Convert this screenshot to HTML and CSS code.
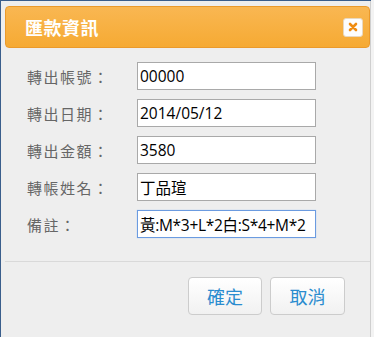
FILE: index.html
```html
<!DOCTYPE html>
<html lang="zh-Hant">
<head>
    <meta charset="UTF-8">
    <meta name="viewport" content="width=device-width, initial-scale=1.0">
    <title>匯款資訊</title>
    <link rel="stylesheet" href="styles.css">
</head>
<body>

    <div class="dialog">
        <div class="dialog-header">
            <span class="dialog-title">匯款資訊</span>
            <span class="close-btn">
                <svg width="10" height="10" viewBox="0 0 10 10">
                    <path d="M2 2 L8 8 M8 2 L2 8" stroke="#f08c10" stroke-width="2.6" stroke-linecap="round"/>
                </svg>
            </span>
        </div>

        <div class="form">
            <div class="row">
                <label for="acct">轉出帳號：</label>
                <input type="text" id="acct" value="00000">
            </div>
            <div class="row">
                <label for="date">轉出日期：</label>
                <input type="text" id="date" value="2014/05/12">
            </div>
            <div class="row">
                <label for="amount">轉出金額：</label>
                <input type="text" id="amount" value="3580">
            </div>
            <div class="row">
                <label for="name">轉帳姓名：</label>
                <input type="text" id="name" value="丁品瑄">
            </div>
            <div class="row">
                <label for="memo">備註：</label>
                <input type="text" id="memo" class="focused" value="黃:M*3+L*2白:S*4+M*2">
            </div>
        </div>

        <div class="dialog-footer">
            <button class="btn btn-ok">確定</button>
            <button class="btn btn-cancel">取消</button>
        </div>
    </div>

</body>
</html>
```

FILE: styles.css
```css
body {
    margin: 0;
    height: 337px;
    overflow: hidden;
    background: linear-gradient(to right, #3a5e8c 371px, #f3f3f3 371px);
    font-family: "Noto Sans CJK TC", "Open Sans", sans-serif;
}

.dialog {
    margin: 1px 0 0 1px;
    width: 370px;
    height: 340px;
    background-color: #eeeeee;
    border-right: 1px solid #cfcfcf;
    box-sizing: border-box;
    padding-top: 5px;
}

.dialog-header {
    margin: 0 0 0 4px;
    width: 365px;
    height: 42px;
    box-sizing: border-box;
    border: 1px solid #eb9a2b;
    border-radius: 4px;
    background: linear-gradient(to bottom, #f9b752, #f6aa33);
    display: flex;
    align-items: center;
    justify-content: space-between;
    padding: 0 6px 0 19px;
}

.dialog-title {
    color: white;
    font-size: 18px;
    font-weight: bold;
    letter-spacing: 0.5px;
}

.close-btn {
    width: 20px;
    height: 19px;
    box-sizing: border-box;
    background-color: #fdfdfd;
    border: 1px solid #e8d8c0;
    border-radius: 3px;
    display: flex;
    align-items: center;
    justify-content: center;
}

.form {
    padding: 14px 0 0 26px;
    display: flex;
    flex-direction: column;
    gap: 9px;
}

.row {
    display: flex;
    align-items: center;
}

.row label {
    width: 110px;
    color: #666666;
    font-size: 15px;
    letter-spacing: 1.5px;
}

.row input {
    width: 179px;
    height: 28px;
    box-sizing: border-box;
    border: 1px solid #a9a9a9;
    background: white;
    padding: 0 2px;
    font-family: "Open Sans", "Noto Sans CJK TC", sans-serif;
    font-size: 15.5px;
    color: black;
    outline: none;
}

.row input.focused {
    border-color: #6b9be0;
    box-shadow: 0 0 1px #9fc3f0;
    letter-spacing: -0.3px;
}

.dialog-footer {
    margin: 23px 0 0 4px;
    width: 365px;
    border-top: 1px solid #d9d9d9;
    padding: 15px 25px 0 0;
    box-sizing: border-box;
    display: flex;
    justify-content: flex-end;
    gap: 8px;
}

.btn {
    width: 74px;
    height: 38px;
    border: 1px solid #cccccc;
    border-radius: 4px;
    background: linear-gradient(to bottom, #ffffff, #f1f1f1);
    color: #2a8ccf;
    font-family: "Noto Sans CJK TC", sans-serif;
    font-size: 18px;
    cursor: pointer;
}

.btn-cancel {
    width: 75px;
}
```
